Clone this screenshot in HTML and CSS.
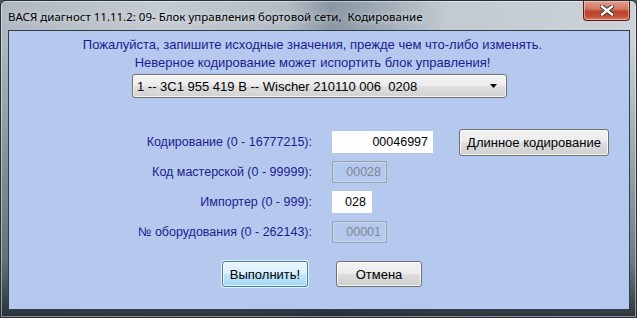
FILE: index.html
```html
<!DOCTYPE html>
<html>
<head>
<meta charset="utf-8">
<title>ВАСЯ диагност</title>
<link rel="stylesheet" href="styles.css">
</head>
<body>
<div class="window">
  <div class="titlebar">
    <span class="title">ВАСЯ диагност 11.11.2: 09- Блок управления бортовой сети,&nbsp; Кодирование</span>
    <div class="close">
      <svg width="14" height="11" viewBox="0 0 14 11">
        <path d="M2 1.5 L12 9.5 M12 1.5 L2 9.5" stroke="#3a2a2a" stroke-width="4.2" stroke-linecap="square" fill="none"/>
        <path d="M2 1.5 L12 9.5 M12 1.5 L2 9.5" stroke="#ffffff" stroke-width="2.4" stroke-linecap="square" fill="none"/>
      </svg>
    </div>
  </div>
  <div class="client">
    <div class="intro">
      <p>Пожалуйста, запишите исходные значения, прежде чем что-либо изменять.</p>
      <p>Неверное кодирование может испортить блок управления!</p>
    </div>
    <div class="select">
      <span>1 -- 3C1 955 419 B -- Wischer 210110 006&nbsp; 0208</span>
      <svg class="arrow" width="7" height="4" viewBox="0 0 7 4"><path d="M0 0 H7 L3.5 4 Z" fill="#000"/></svg>
    </div>
    <div class="form">
      <div class="label">Кодирование (0 - 16777215):</div>
      <div class="field f-wide">00046997</div>
      <div class="cell"><div class="btn btn-long">Длинное кодирование</div></div>

      <div class="label">Код мастерской (0 - 99999):</div>
      <div class="field f-mid disabled">00028</div>
      <div class="cell"></div>

      <div class="label">Импортер (0 - 999):</div>
      <div class="field f-small left">028</div>
      <div class="cell"></div>

      <div class="label">№ оборудования (0 - 262143):</div>
      <div class="field f-mid disabled">00001</div>
      <div class="cell"></div>
    </div>
    <div class="actions">
      <div class="btn btn-action default">Выполнить!</div>
      <div class="btn btn-action">Отмена</div>
    </div>
  </div>
</div>
</body>
</html>
```

FILE: styles.css
```css
* { box-sizing: border-box; }
html, body { margin: 0; padding: 0; }
body { width: 637px; height: 318px; overflow: hidden; background: #4a5663; }

.window {
  width: 637px;
  height: 318px;
  display: flex;
  flex-direction: column;
  border: 1px solid #25303b;
  border-radius: 6px 6px 0 0;
  background:
    linear-gradient(to bottom, rgba(255,255,255,0) 0px, rgba(255,255,255,0) 40px, rgba(40,52,64,0.55) 260px, rgba(20,28,36,0.88) 318px),
    linear-gradient(to right, #aeb7c0 0%, #c4cbd2 25%, #b3bcc5 45%, #8a97a4 52%, #9aa6b2 58%, #c2c9d0 70%, #ccd2d8 100%);
  box-shadow: inset 0 0 0 1px rgba(255,255,255,0.45);
}

.titlebar {
  height: 29px;
  flex: none;
  display: flex;
  justify-content: space-between;
  align-items: flex-start;
  padding-left: 7px;
  padding-right: 6px;
}
.title {
  align-self: center;
  margin-top: 1px;
  font-family: "Noto Sans", "Open Sans", sans-serif;
  font-size: 11.5px;
  color: #000;
  white-space: nowrap;
  text-shadow: 0 0 6px rgba(255,255,255,0.8);
}
.close {
  width: 47px;
  height: 20px;
  display: flex;
  align-items: center;
  justify-content: center;
  border: 1px solid #5a1f17;
  border-top: none;
  border-radius: 0 0 4px 4px;
  background: linear-gradient(to bottom, #e2a090 0%, #d27a66 40%, #bd4430 55%, #c44c34 80%, #d9806a 100%);
  box-shadow: inset 0 0 0 1px rgba(255,220,210,0.5);
}

.client {
  flex: 1;
  margin: 0 6px 7px 7px;
  border: 1px solid #2f3d4c;
  background: #b5c9ef;
  display: flex;
  flex-direction: column;
  font-family: "Liberation Sans", Arial, sans-serif;
  font-size: 12.5px;
  color: #1c1c8e;
}

.intro {
  padding-top: 5px;
  padding-right: 13px;
  text-align: center;
}
.intro p {
  margin: 0;
  line-height: 18px;
  font-size: 13px;
}

.select {
  align-self: flex-start;
  margin-left: 123px;
  margin-top: 2px;
  width: 375px;
  height: 24px;
  border: 1px solid #707070;
  border-radius: 3px;
  background: linear-gradient(to bottom, #f4f4f4 0%, #ececec 48%, #dedede 52%, #d2d2d2 100%);
  box-shadow: inset 0 0 0 1px rgba(255,255,255,0.7);
  display: flex;
  align-items: center;
  justify-content: space-between;
  padding: 0 9px 0 4px;
  color: #000;
  font-size: 13px;
}

.form {
  margin-top: 29px;
  display: grid;
  grid-template-columns: 303px 101px 1fr;
  column-gap: 20px;
  grid-auto-rows: 30px;
  align-items: center;
}
.label {
  text-align: right;
  font-size: 12.5px;
  white-space: nowrap;
}
.field {
  height: 22px;
  background: #fff;
  color: #000;
  font-size: 12.5px;
  display: flex;
  align-items: center;
  justify-content: flex-end;
  padding: 0 5px;
}
.f-wide { width: 101px; }
.f-mid { width: 55px; }
.f-small { width: 40px; }
.field.left { justify-content: flex-start; padding-left: 13px; }
.field.disabled {
  background: #b5c9ef;
  border: 1px solid #9aa2ad;
  box-shadow: inset 0 0 0 1px #c6d4ee;
  color: #80868f;
}
.cell { display: flex; align-items: center; padding-left: 6px; }

.btn {
  height: 26px;
  border: 1px solid #707070;
  border-radius: 3px;
  background: linear-gradient(to bottom, #f2f2f2 0%, #ebebeb 48%, #dddddd 52%, #cfcfcf 100%);
  box-shadow: inset 0 0 0 1px rgba(255,255,255,0.8);
  color: #000;
  font-size: 13px;
  display: flex;
  align-items: center;
  justify-content: center;
}
.btn-long { width: 150px; height: 27px; }

.actions {
  margin-top: 14px;
  padding-left: 213px;
  display: flex;
  gap: 28px;
}
.btn-action { width: 86px; }
.btn.default {
  border-color: #3c7fb1;
  background: linear-gradient(to bottom, #eaf6fd 0%, #d9f0fc 48%, #bee6fd 52%, #a7d9f5 100%);
  box-shadow: inset 0 0 0 1px rgba(255,255,255,0.7), 0 0 0 1px #e8f1fb;
}
```
